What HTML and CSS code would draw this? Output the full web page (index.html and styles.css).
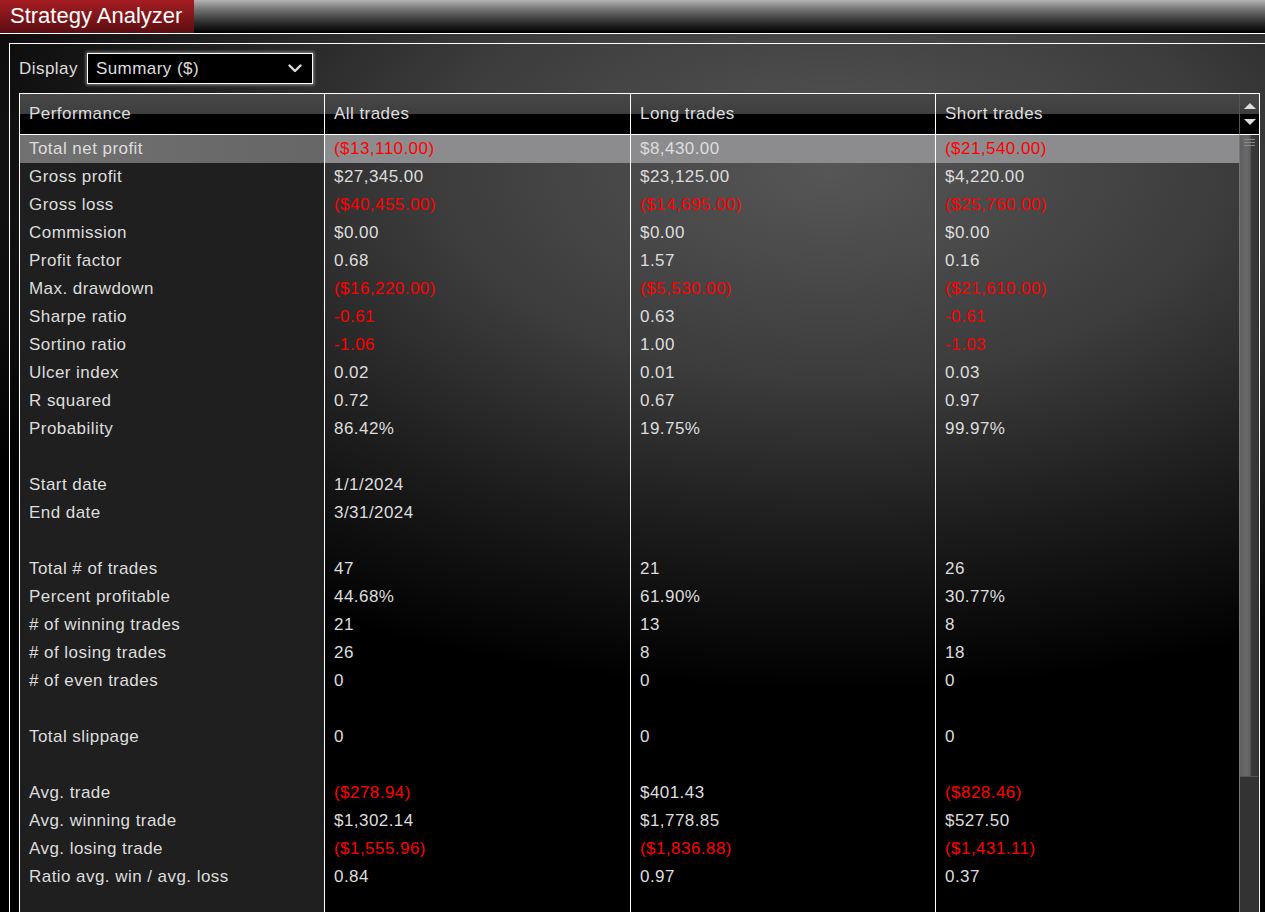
FILE: index.html
```html
<!DOCTYPE html>
<html lang="en">

<head>
    <meta charset="UTF-8">
    <meta name="viewport" content="width=device-width, initial-scale=1.0">
    <title>Strategy Analyzer</title>
    <link rel="stylesheet" href="styles.css">
</head>

<body>
    <!-- Window title -->
    <div class="titlebar">
        <div class="title-tab">Strategy Analyzer</div>
    </div>

    <div class="panel">
        <!-- Display selector -->
        <div class="display-row">
            <label for="display">Display</label>
            <div class="select" id="display">
                <span>Summary ($)</span>
                <svg width="14" height="9" viewBox="0 0 14 9"><polyline points="1.5,1.5 7,7 12.5,1.5" fill="none" stroke="#ddd" stroke-width="2.4" stroke-linecap="round" stroke-linejoin="round"/></svg>
            </div>
        </div>

        <!-- Performance grid -->
        <div class="grid">
            <table class="perf">
                <thead>
                    <tr><th>Performance</th><th>All trades</th><th>Long trades</th><th>Short trades</th></tr>
                </thead>
                <tbody>
                    <tr class="selected"><td>Total net profit</td><td class="neg">($13,110.00)</td><td>$8,430.00</td><td class="neg">($21,540.00)</td></tr>
                    <tr><td>Gross profit</td><td>$27,345.00</td><td>$23,125.00</td><td>$4,220.00</td></tr>
                    <tr><td>Gross loss</td><td class="neg">($40,455.00)</td><td class="neg">($14,695.00)</td><td class="neg">($25,760.00)</td></tr>
                    <tr><td>Commission</td><td>$0.00</td><td>$0.00</td><td>$0.00</td></tr>
                    <tr><td>Profit factor</td><td>0.68</td><td>1.57</td><td>0.16</td></tr>
                    <tr><td>Max. drawdown</td><td class="neg">($16,220.00)</td><td class="neg">($5,530.00)</td><td class="neg">($21,610.00)</td></tr>
                    <tr><td>Sharpe ratio</td><td class="neg">-0.61</td><td>0.63</td><td class="neg">-0.61</td></tr>
                    <tr><td>Sortino ratio</td><td class="neg">-1.06</td><td>1.00</td><td class="neg">-1.03</td></tr>
                    <tr><td>Ulcer index</td><td>0.02</td><td>0.01</td><td>0.03</td></tr>
                    <tr><td>R squared</td><td>0.72</td><td>0.67</td><td>0.97</td></tr>
                    <tr><td>Probability</td><td>86.42%</td><td>19.75%</td><td>99.97%</td></tr>
                    <tr><td></td><td></td><td></td><td></td></tr>
                    <tr><td>Start date</td><td>1/1/2024</td><td></td><td></td></tr>
                    <tr><td>End date</td><td>3/31/2024</td><td></td><td></td></tr>
                    <tr><td></td><td></td><td></td><td></td></tr>
                    <tr><td>Total # of trades</td><td>47</td><td>21</td><td>26</td></tr>
                    <tr><td>Percent profitable</td><td>44.68%</td><td>61.90%</td><td>30.77%</td></tr>
                    <tr><td># of winning trades</td><td>21</td><td>13</td><td>8</td></tr>
                    <tr><td># of losing trades</td><td>26</td><td>8</td><td>18</td></tr>
                    <tr><td># of even trades</td><td>0</td><td>0</td><td>0</td></tr>
                    <tr><td></td><td></td><td></td><td></td></tr>
                    <tr><td>Total slippage</td><td>0</td><td>0</td><td>0</td></tr>
                    <tr><td></td><td></td><td></td><td></td></tr>
                    <tr><td>Avg. trade</td><td class="neg">($278.94)</td><td>$401.43</td><td class="neg">($828.46)</td></tr>
                    <tr><td>Avg. winning trade</td><td>$1,302.14</td><td>$1,778.85</td><td>$527.50</td></tr>
                    <tr><td>Avg. losing trade</td><td class="neg">($1,555.96)</td><td class="neg">($1,836.88)</td><td class="neg">($1,431.11)</td></tr>
                    <tr><td>Ratio avg. win / avg. loss</td><td>0.84</td><td>0.97</td><td>0.37</td></tr>
                    <tr><td></td><td></td><td></td><td></td></tr>
                    <tr><td></td><td></td><td></td><td></td></tr>
                </tbody>
            </table>

            <!-- Vertical scrollbar -->
            <div class="vscroll">
                <div class="arrows">
                    <span class="arrow-up"></span>
                    <span class="arrow-down"></span>
                </div>
                <div class="track">
                    <div class="thumb">
                        <span class="grip"></span>
                        <span class="grip"></span>
                        <span class="grip"></span>
                    </div>
                </div>
            </div>
        </div>
    </div>
</body>

</html>
```

FILE: styles.css
```css
html, body {
    height: 100%;
    overflow: hidden;
}

body {
    margin: 0;
    font-family: "Liberation Sans", Arial, sans-serif;
    font-size: 17px;
    letter-spacing: 0.45px;
    color: #dddddd;
    background-color: #000;
    background-image: radial-gradient(ellipse 1000px 520px at 830px 170px, #565656 0%, #3c3c3c 40%, #1c1c1c 70%, #000 100%);
}

.titlebar {
    height: 33px;
    border-bottom: 1px solid #fff;
    background: linear-gradient(#b4b4b4, #707070 30%, #2a2a2a 70%, #000);
    display: flex;
}

.title-tab {
    width: 194px;
    box-sizing: border-box;
    padding: 0 8px 2px 10px;
    line-height: 31px;
    font-size: 22px;
    letter-spacing: 0;
    white-space: nowrap;
    color: #fff;
    background: linear-gradient(#a51d22, #5c0e12);
}

.panel {
    margin: 9px -10px 0 9px;
    padding: 9px 9px 0;
    border: 1px solid #fff;
    border-bottom: none;
    height: 900px;
}

.display-row {
    display: flex;
    align-items: center;
    gap: 9px;
    height: 31px;
    margin-bottom: 9px;
}

.select {
    width: 226px;
    height: 31px;
    box-sizing: border-box;
    display: flex;
    align-items: center;
    justify-content: space-between;
    padding: 0 10px 0 8px;
    background: #000;
    border: 1px solid #fff;
    box-shadow: 0 0 3px 1px rgba(255, 255, 255, 0.45);
}

.grid {
    display: flex;
    align-items: flex-start;
    width: fit-content;
    height: 860px;
    border: 1px solid #fff;
    border-bottom: none;
}

.perf {
    border-collapse: separate;
    border-spacing: 0;
    table-layout: fixed;
    width: 1219px;
}

.perf th, .perf td {
    box-sizing: border-box;
    padding: 0 9px;
    text-align: left;
    font-weight: normal;
    white-space: nowrap;
    border-left: 1px solid #fff;
}

.perf th:first-child, .perf td:first-child {
    border-left: none;
}

.perf th:nth-child(1) { width: 304px; }
.perf th:nth-child(2) { width: 306px; }
.perf th:nth-child(3) { width: 305px; }
.perf th:nth-child(4) { width: 304px; }

.perf th {
    line-height: 40px;
    border-bottom: 1px solid #fff;
    background: linear-gradient(#474747, #3e3e3e 50%, #000 50%);
}

.perf td {
    height: 28px;
    line-height: 28px;
}

.perf td:first-child {
    background: #1f1f1f;
}

.perf .neg {
    color: #ff0000;
}

.perf tr.selected td {
    background: #8c8c8f;
}

.perf tr.selected td:first-child {
    background: linear-gradient(to right, #717171, #666);
}

.vscroll {
    width: 20px;
    height: 100%;
    display: flex;
    flex-direction: column;
}

.arrows {
    height: 40px;
    border-left: 1px solid #555;
    border-bottom: 1px solid #fff;
    background: linear-gradient(#474747, #3e3e3e 50%, #000 50%);
    display: flex;
    flex-direction: column;
    align-items: center;
    justify-content: center;
    gap: 10px;
}

.arrow-up, .arrow-down {
    width: 0;
    height: 0;
    border-left: 6px solid transparent;
    border-right: 6px solid transparent;
}

.arrow-up {
    border-bottom: 6px solid #ddd;
}

.arrow-down {
    border-top: 6px solid #ddd;
}

.track {
    flex: 1;
    background: #333;
    border-left: 1px solid #777;
    border-right: 1px solid #2a2a2a;
}

.thumb {
    height: 642px;
    background: linear-gradient(to right, #5f5f5f, #6a6a6a 40%, #5a5a5a 58%, #3a3a3a 60%, #353535);
    border-bottom: 1px solid #555;
    padding-top: 4px;
    box-sizing: border-box;
    display: flex;
    flex-direction: column;
    align-items: center;
    gap: 2px;
}

.grip {
    width: 11px;
    height: 1px;
    background: #8a8a8a;
}
```
